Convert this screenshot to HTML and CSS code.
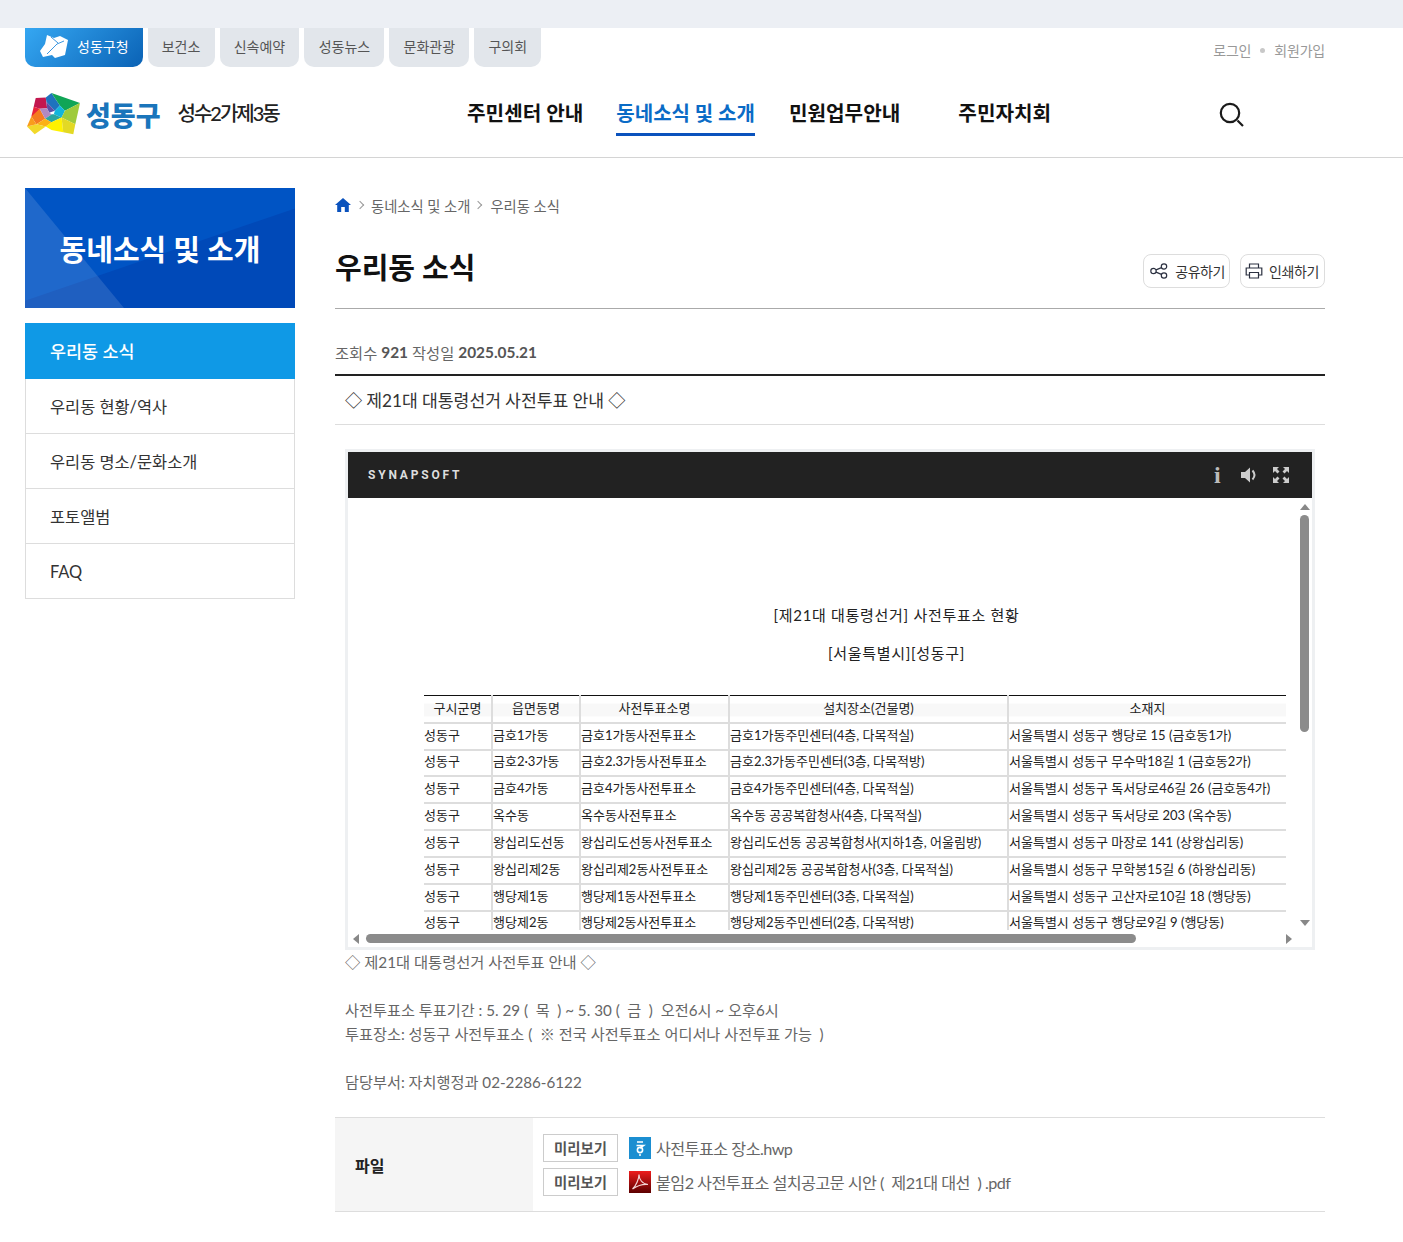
FILE: index.html
```html
<!DOCTYPE html>
<html lang="ko">

<head>
    <meta charset="UTF-8">
    <meta name="viewport" content="width=device-width, initial-scale=1.0">
    <title>우리동 소식</title>
    <link rel="stylesheet" href="styles.css">
</head>

<body>
    <div class="top-strip"></div>

    <div class="util-row">
        <ul class="site-tabs">
            <li class="site-tab site-tab-main">
                <svg class="tab-logo" viewBox="0 0 28 24">
                    <path d="M7 1 L14 4 L20 2 L28 6 L25 21 L15 24 L12 21 L3 23 L0 17 L5 10 Z" fill="#fff" />
                    <path d="M7 20 L17 10 L24 7 M11 3 L18 9" stroke="#3b97e0" stroke-width="1" fill="none" />
                </svg>
                성동구청
            </li>
            <li class="site-tab">보건소</li>
            <li class="site-tab">신속예약</li>
            <li class="site-tab">성동뉴스</li>
            <li class="site-tab">문화관광</li>
            <li class="site-tab">구의회</li>
        </ul>
        <div class="member-links">
            <span>로그인</span>
            <i class="member-dot"></i>
            <span>회원가입</span>
        </div>
    </div>

    <header class="site-header">
        <div class="brand">
            <svg class="brand-mark" viewBox="22 25 158 125">
                <polygon points="48,40 78,38 82,70 60,72 42,66" fill="#c2174f" />
                <polygon points="78,38 95,25 120,62 105,78 80,52" fill="#1e73be" />
                <polygon points="80,52 105,78 88,84 82,70" fill="#5a4fa8" />
                <polygon points="95,25 180,55 135,78 120,62" fill="#10a556" />
                <polygon points="105,78 120,62 135,78 125,98 102,88" fill="#12b5dc" />
                <polygon points="135,78 180,55 166,118 125,98" fill="#9fcb3c" />
                <polygon points="42,66 60,72 45,92 35,95" fill="#e8233b" />
                <polygon points="35,95 60,72 76,102 50,118" fill="#f47b20" />
                <polygon points="60,72 82,70 88,84 96,88 76,102" fill="#b189c0" />
                <polygon points="96,88 102,88 125,98 95,112 76,102" fill="#2aa5a0" />
                <polygon points="95,112 125,98 130,142 95,135 78,125" fill="#fff200" />
                <polygon points="50,118 76,102 95,112 78,125" fill="#fbb116" />
                <polygon points="22,125 50,118 78,125 45,148" fill="#f2d92a" />
                <polygon points="35,95 50,118 22,125" fill="#f99d1c" />
                <polygon points="125,98 166,118 160,148 130,142" fill="#e3d924" />
            </svg>
            <span class="brand-gu">성동구</span>
            <span class="brand-dong">성수2가제3동</span>
        </div>
        <nav class="gnb">
            <a class="gnb-item">주민센터 안내</a>
            <a class="gnb-item gnb-item-on">동네소식 및 소개</a>
            <a class="gnb-item">민원업무안내</a>
            <a class="gnb-item gnb-item-last">주민자치회</a>
        </nav>
        <svg class="search-icon" viewBox="0 0 28 28">
            <circle cx="12" cy="12" r="9.2" fill="none" stroke="#1a1a1a" stroke-width="2.2" />
            <path d="M19.5 19.5 L25 25" stroke="#1a1a1a" stroke-width="2.2" />
        </svg>
    </header>

    <div class="page">
        <aside class="side">
            <h2 class="side-title"><span>동네소식 및 소개</span></h2>
            <ul class="side-menu">
                <li class="side-item side-item-on">우리동 소식</li>
                <li class="side-item">우리동 현황/역사</li>
                <li class="side-item">우리동 명소/문화소개</li>
                <li class="side-item">포토앨범</li>
                <li class="side-item">FAQ</li>
            </ul>
        </aside>

        <main class="content">
            <div class="crumbs">
                <svg class="crumb-home" viewBox="0 0 16 14">
                    <path d="M8 0 L16 7 L13.8 7 L13.8 14 L9.8 14 L9.8 9 L6.2 9 L6.2 14 L2.2 14 L2.2 7 L0 7 Z" fill="#0a52bd" />
                </svg>
                <i class="crumb-arrow"></i>
                <span>동네소식 및 소개</span>
                <i class="crumb-arrow"></i>
                <span>우리동 소식</span>
            </div>

            <div class="title-row">
                <h1 class="page-title">우리동 소식</h1>
                <div class="title-tools">
                    <button class="tool-btn">
                        <svg viewBox="0 0 18 16" class="tool-icon">
                            <circle cx="3.5" cy="8" r="2.7" />
                            <circle cx="14" cy="3.5" r="2.7" />
                            <circle cx="14" cy="12.5" r="2.7" />
                            <path d="M6 6.9 L11.5 4.6 M6 9.1 L11.5 11.4" />
                        </svg>
                        공유하기
                    </button>
                    <button class="tool-btn">
                        <svg viewBox="0 0 18 16" class="tool-icon">
                            <path d="M4.5 5 V1 H13.5 V5 M4.5 12 H1.2 V5 H16.8 V12 H13.5" />
                            <path d="M4.5 9.5 H13.5 V15 H4.5 Z" />
                        </svg>
                        인쇄하기
                    </button>
                </div>
            </div>

            <div class="post-meta">조회수 <b>921</b> 작성일 <b>2025.05.21</b></div>
            <h3 class="post-head">◇ 제21대 대통령선거 사전투표 안내 ◇</h3>

            <div class="post-body">
                <section class="viewer">
                    <div class="viewer-bar">
                        <span class="viewer-brand">SYNAPSOFT</span>
                        <div class="viewer-tools">
                            <span class="viewer-info">i</span>
                            <svg class="viewer-icon" viewBox="0 0 18 16">
                                <path d="M0 5 H4 L9 0.5 V15.5 L4 11 H0 Z" fill="#ccc" />
                                <path d="M11.5 3.5 Q15.5 8 11.5 12.5" stroke="#ccc" stroke-width="2" fill="none" />
                            </svg>
                            <svg class="viewer-icon" viewBox="0 0 16 16">
                                <path d="M0 0 H6 L4 2 L6.5 4.5 L4.5 6.5 L2 4 L0 6 Z" fill="#ccc" />
                                <path d="M16 0 H10 L12 2 L9.5 4.5 L11.5 6.5 L14 4 L16 6 Z" fill="#ccc" />
                                <path d="M0 16 H6 L4 14 L6.5 11.5 L4.5 9.5 L2 12 L0 10 Z" fill="#ccc" />
                                <path d="M16 16 H10 L12 14 L9.5 11.5 L11.5 9.5 L14 12 L16 10 Z" fill="#ccc" />
                            </svg>
                        </div>
                    </div>
                    <div class="viewer-body">
                        <div class="doc">
                            <p class="doc-title">[제21대 대통령선거] 사전투표소 현황</p>
                            <p class="doc-title doc-sub">[서울특별시][성동구]</p>
                            <table class="doc-table">
                                <colgroup>
                                    <col class="col-a">
                                    <col class="col-b">
                                    <col class="col-c">
                                    <col class="col-d">
                                    <col class="col-e">
                                </colgroup>
                                <thead>
                                    <tr>
                                        <th>구시군명</th>
                                        <th>읍면동명</th>
                                        <th>사전투표소명</th>
                                        <th>설치장소(건물명)</th>
                                        <th>소재지</th>
                                    </tr>
                                </thead>
                                <tbody>
                                    <tr>
                                        <td>성동구</td>
                                        <td>금호1가동</td>
                                        <td>금호1가동사전투표소</td>
                                        <td>금호1가동주민센터(4층, 다목적실)</td>
                                        <td>서울특별시 성동구 행당로 15 (금호동1가)</td>
                                    </tr>
                                    <tr>
                                        <td>성동구</td>
                                        <td>금호2·3가동</td>
                                        <td>금호2.3가동사전투표소</td>
                                        <td>금호2.3가동주민센터(3층, 다목적방)</td>
                                        <td>서울특별시 성동구 무수막18길 1 (금호동2가)</td>
                                    </tr>
                                    <tr>
                                        <td>성동구</td>
                                        <td>금호4가동</td>
                                        <td>금호4가동사전투표소</td>
                                        <td>금호4가동주민센터(4층, 다목적실)</td>
                                        <td>서울특별시 성동구 독서당로46길 26 (금호동4가)</td>
                                    </tr>
                                    <tr>
                                        <td>성동구</td>
                                        <td>옥수동</td>
                                        <td>옥수동사전투표소</td>
                                        <td>옥수동 공공복합청사(4층, 다목적실)</td>
                                        <td>서울특별시 성동구 독서당로 203 (옥수동)</td>
                                    </tr>
                                    <tr>
                                        <td>성동구</td>
                                        <td>왕십리도선동</td>
                                        <td>왕십리도선동사전투표소</td>
                                        <td>왕십리도선동 공공복합청사(지하1층, 어울림방)</td>
                                        <td>서울특별시 성동구 마장로 141 (상왕십리동)</td>
                                    </tr>
                                    <tr>
                                        <td>성동구</td>
                                        <td>왕십리제2동</td>
                                        <td>왕십리제2동사전투표소</td>
                                        <td>왕십리제2동 공공복합청사(3층, 다목적실)</td>
                                        <td>서울특별시 성동구 무학봉15길 6 (하왕십리동)</td>
                                    </tr>
                                    <tr>
                                        <td>성동구</td>
                                        <td>행당제1동</td>
                                        <td>행당제1동사전투표소</td>
                                        <td>행당제1동주민센터(3층, 다목적실)</td>
                                        <td>서울특별시 성동구 고산자로10길 18 (행당동)</td>
                                    </tr>
                                    <tr>
                                        <td>성동구</td>
                                        <td>행당제2동</td>
                                        <td>행당제2동사전투표소</td>
                                        <td>행당제2동주민센터(2층, 다목적방)</td>
                                        <td>서울특별시 성동구 행당로9길 9 (행당동)</td>
                                    </tr>
                                </tbody>
                            </table>
                        </div>
                        <div class="scroll-v">
                            <i class="arrow-up"></i>
                            <i class="thumb-v"></i>
                            <i class="arrow-down"></i>
                        </div>
                        <div class="scroll-h">
                            <i class="arrow-left"></i>
                            <i class="thumb-h"></i>
                            <i class="arrow-right"></i>
                        </div>
                    </div>
                </section>

                <p class="post-text post-text-lead">◇ 제21대 대통령선거 사전투표 안내 ◇</p>
                <p class="post-text">&nbsp;</p>
                <p class="post-text">사전투표소 투표기간 : 5. 29 (&ensp;목&ensp;) ~ 5. 30 (&ensp;금&ensp;) &nbsp;오전6시 ~ 오후6시</p>
                <p class="post-text">투표장소: 성동구 사전투표소 (&ensp;※ 전국 사전투표소 어디서나 사전투표 가능&ensp;)</p>
                <p class="post-text">&nbsp;</p>
                <p class="post-text">담당부서: 자치행정과 02-2286-6122</p>
            </div>

            <div class="files">
                <div class="files-label">파일</div>
                <ul class="files-list">
                    <li class="file-row">
                        <button class="preview-btn">미리보기</button>
                        <svg class="file-icon" viewBox="0 0 22 22">
                            <rect width="22" height="22" fill="#1b8ed1" />
                            <path d="M8 5 H14 M7.5 8.5 H14.5 L11 11" stroke="#fff" stroke-width="1.6" fill="none" />
                            <circle cx="11" cy="13" r="2.6" stroke="#fff" stroke-width="1.6" fill="none" />
                            <circle cx="11" cy="18" r="1" fill="#fff" />
                        </svg>
                        <span>사전투표소 장소.hwp</span>
                    </li>
                    <li class="file-row">
                        <button class="preview-btn">미리보기</button>
                        <svg class="file-icon" viewBox="0 0 22 22">
                            <defs>
                                <linearGradient id="pdfRed" x1="0" y1="0" x2="0" y2="1">
                                    <stop offset="0" stop-color="#ee1c1c" />
                                    <stop offset="1" stop-color="#5c0000" />
                                </linearGradient>
                            </defs>
                            <rect width="22" height="22" fill="url(#pdfRed)" />
                            <path d="M3.5 18 C7 15 10 8 10 3.5 C10 8 13 13 19 13.5 C14 13 8 15 3.5 18 Z" stroke="#f3d5d5" stroke-width="1.2" fill="none" />
                        </svg>
                        <span>붙임2 사전투표소 설치공고문 시안 (&ensp;제21대 대선&ensp;) .pdf</span>
                    </li>
                </ul>
            </div>
        </main>
    </div>
</body>

</html>
```

FILE: styles.css
```css
* {
    box-sizing: border-box;
}

body {
    margin: 0;
    font-family: Lato, "Noto Sans CJK KR", sans-serif;
    color: #555;
    background: #fff;
}

ul {
    margin: 0;
    padding: 0;
    list-style: none;
}

h1,
h2,
h3,
p {
    margin: 0;
}

.top-strip {
    height: 28px;
    background: #eceff4;
}

/* top tabs */
.util-row {
    display: flex;
    justify-content: space-between;
    height: 39px;
    padding: 0 78px 0 25px;
}

.site-tabs {
    display: flex;
    gap: 5px;
}

.site-tab {
    display: flex;
    align-items: center;
    height: 39px;
    padding: 0 14.2px 3px;
    font-size: 14px;
    color: #555;
    background: #e2e6eb;
    border-radius: 0 0 10px 10px;
}

.site-tab-main {
    gap: 9px;
    padding: 0 14px 3px 15px;
    color: #fff;
    background: linear-gradient(135deg, #35a7f2 0%, #0a62b5 100%);
}

.tab-logo {
    width: 28px;
    height: 24px;
}

.member-links {
    display: flex;
    align-items: center;
    gap: 9px;
    height: 44px;
    font-size: 14px;
    letter-spacing: -0.2px;
    color: #999;
}

.member-dot {
    width: 5px;
    height: 5px;
    border-radius: 50%;
    background: #c8c8c8;
}

/* header */
.site-header {
    display: flex;
    align-items: center;
    height: 91px;
    padding: 0 78px 0 27px;
    border-bottom: 1px solid #d4d4d4;
}

.brand {
    display: flex;
    align-items: center;
    width: 440px;
    flex: none;
}

.brand-mark {
    width: 53px;
    height: 42px;
    margin-top: 4px;
}

.brand-gu {
    margin: 4px 0 0 6px;
    font-size: 27px;
    font-weight: 900;
    color: #1a75bb;
}

.brand-dong {
    margin-left: 17px;
    font-size: 20px;
    font-weight: 500;
    letter-spacing: -2px;
    color: #222;
}

.gnb {
    display: flex;
    gap: 33px;
    height: 38px;
    margin-top: 10px;
}

.gnb-item {
    font-size: 20.2px;
    font-weight: 700;
    line-height: 30px;
    color: #111;
    white-space: nowrap;
}

.gnb-item-on {
    height: 38px;
    margin-right: 1px;
    font-size: 20px;
    color: #0a6bc6;
    border-bottom: 3px solid #0a52bd;
}

.gnb-item-last {
    margin-left: 25px;
}

.search-icon {
    width: 28px;
    height: 28px;
    margin-left: auto;
    margin-right: 79px;
    margin-top: 6px;
}

/* page */
.page {
    display: flex;
    gap: 40px;
    padding: 30px 78px 30px 25px;
}

.side {
    width: 270px;
    flex: none;
}

.side-title {
    position: relative;
    display: flex;
    align-items: center;
    justify-content: center;
    height: 120px;
    font-size: 29px;
    font-weight: 700;
    color: #fff;
    background: #0054c4;
    overflow: hidden;
}

.side-title::before {
    content: "";
    position: absolute;
    inset: 0;
    background: #0049b8;
    clip-path: polygon(0 94%, 100% 17%, 100% 100%, 0 100%);
}

.side-title::after {
    content: "";
    position: absolute;
    inset: 0;
    background: rgba(255, 255, 255, 0.12);
    clip-path: polygon(0 0, 99px 100%, 0 100%);
}

.side-title span {
    position: relative;
    z-index: 1;
}

.side-menu {
    margin-top: 15px;
    border: 1px solid #ddd;
    border-top: 0;
}

.side-item {
    display: flex;
    align-items: center;
    height: 55px;
    padding: 0 0 1px 24px;
    font-size: 16.4px;
    color: #333;
    border-bottom: 1px solid #ddd;
}

.side-item:last-child {
    height: 54px;
    padding: 1px 0 0 24px;
    border-bottom: 0;
}

.side-item-on {
    height: 56px;
    margin: 0 -1px;
    padding: 0 0 2px 25px;
    font-size: 17.4px;
    font-weight: 500;
    color: #fff;
    background: #0f99e6;
    border-bottom: 0;
}

.content {
    flex: 1;
    min-width: 0;
}

.crumbs {
    display: flex;
    align-items: center;
    height: 34px;
    font-size: 14.3px;
    color: #666;
}

.crumb-home {
    width: 16px;
    height: 14px;
}

.crumb-arrow {
    width: 6px;
    height: 6px;
    margin: 0 9px 0 5px;
    border-top: 1px solid #999;
    border-right: 1px solid #999;
    transform: rotate(45deg);
}

.crumb-home + .crumb-arrow {
    margin-left: 6px;
    margin-right: 8px;
}

.title-row {
    display: flex;
    align-items: center;
    justify-content: space-between;
    height: 87px;
    padding: 8px 0 7px;
    border-bottom: 1px solid #aaa;
}

.page-title {
    font-size: 29px;
    font-weight: 700;
    color: #111;
}

.title-tools {
    display: flex;
    gap: 10px;
    margin-top: 10px;
}

.tool-btn {
    display: flex;
    align-items: center;
    gap: 7px;
    height: 34px;
    padding: 0 4px 0 6px;
    font-family: inherit;
    font-size: 14px;
    letter-spacing: -0.4px;
    color: #333;
    background: #fff;
    border: 1px solid #ddd;
    border-radius: 8px;
}

.tool-btn + .tool-btn {
    gap: 6px;
    padding: 0 5px 0 4px;
}

.tool-icon {
    width: 18px;
    height: 16px;
    fill: none;
    stroke: #2b3040;
    stroke-width: 1.2;
}

.post-meta {
    display: flex;
    align-items: center;
    gap: 4px;
    height: 67px;
    padding-top: 20px;
    font-size: 15.3px;
    color: #666;
    border-bottom: 2px solid #222;
}

.post-meta b {
    font-size: 15.4px;
    font-weight: 700;
    color: #555;
}

.post-head {
    display: flex;
    align-items: center;
    height: 49px;
    padding: 0 0 2px 10px;
    font-size: 17.2px;
    font-weight: 400;
    word-spacing: -0.3px;
    color: #333;
    border-bottom: 1px solid #ddd;
}

.post-body {
    padding: 24px 10px 23px;
}

/* document viewer */
.viewer {
    display: flex;
    flex-direction: column;
    width: 970px;
    height: 501px;
    border: 3px solid #eef0f2;
}

.viewer-bar {
    display: flex;
    align-items: center;
    justify-content: space-between;
    height: 46px;
    padding: 0 22px 0 20px;
    flex: none;
    background: #222;
}

.viewer-brand {
    font-family: Roboto, sans-serif;
    font-size: 12px;
    font-weight: 700;
    letter-spacing: 2.8px;
    color: #ddd;
}

.viewer-tools {
    display: flex;
    align-items: center;
    gap: 13px;
}

.viewer-info {
    width: 8px;
    margin-right: 6px;
    font-family: "Liberation Serif", serif;
    font-size: 24px;
    font-weight: 700;
    line-height: 22px;
    color: #bbb;
}

.viewer-icon {
    width: 18px;
    height: 16px;
}

.viewer-body {
    display: grid;
    grid-template-columns: 1fr 17px;
    grid-template-rows: 1fr 17px;
    flex: 1;
    min-height: 0;
}

.doc {
    padding: 105px 8px 0 76px;
    overflow: hidden;
}

.doc-title {
    padding-left: 82px;
    font-size: 15px;
    line-height: 24px;
    letter-spacing: 0.7px;
    text-align: center;
    color: #222;
}

.doc-sub {
    margin-top: 14px;
}

.doc-table {
    width: 862px;
    margin-top: 30px;
    table-layout: fixed;
    border-collapse: collapse;
    font-size: 13px;
    color: #222;
}

.col-a {
    width: 68px;
}

.col-b {
    width: 88px;
}

.col-c {
    width: 149px;
}

.col-d {
    width: 279px;
}

.col-e {
    width: 278px;
}

.doc-table th {
    height: 27px;
    padding: 0 0 2px;
    font-weight: 400;
    border-top: 1px solid #111;
    border-left: 2px solid #ddd;
    border-bottom: 2px solid #ddd;
    background: linear-gradient(#fff 7px, #f8f8f8 7px, #f8f8f8 20px, #fff 20px);
}

.doc-table td {
    height: 27px;
    padding: 0 0 4px;
    white-space: nowrap;
    border-left: 2px solid #ddd;
    border-bottom: 2px solid #ddd;
}

.doc-table tr:nth-child(2) td,
.doc-table tr:nth-child(8) td {
    height: 26px;
}

.doc-table th:first-child,
.doc-table td:first-child {
    border-left: 0;
}

.scroll-v {
    display: flex;
    flex-direction: column;
    align-items: center;
    padding: 6px 0 0 2px;
    grid-row: 1 / 2;
    grid-column: 2;
}

.arrow-up {
    border: 5px solid transparent;
    border-top: 0;
    border-bottom: 6px solid #888;
}

.thumb-v {
    width: 9px;
    height: 217px;
    margin-top: 5px;
    border-radius: 5px;
    background: #8b8b8b;
}

.arrow-down {
    margin-top: auto;
    margin-bottom: 4px;
    border: 5px solid transparent;
    border-bottom: 0;
    border-top: 6px solid #888;
}

.scroll-h {
    display: flex;
    align-items: center;
    padding: 0 20px 0 5px;
    grid-row: 2;
    grid-column: 1 / 3;
}

.arrow-left {
    border: 5px solid transparent;
    border-left: 0;
    border-right: 6px solid #888;
}

.thumb-h {
    width: 770px;
    height: 9px;
    margin-left: 7px;
    border-radius: 5px;
    background: #8b8b8b;
}

.arrow-right {
    margin-left: auto;
    border: 5px solid transparent;
    border-right: 0;
    border-left: 6px solid #888;
}

.post-text {
    font-size: 15.2px;
    line-height: 24px;
    color: #666;
}

.post-text-lead {
    font-size: 15.3px;
}

/* attached files */
.files {
    display: flex;
    border-top: 1px solid #ddd;
    border-bottom: 1px solid #ddd;
}

.files-label {
    display: flex;
    align-items: center;
    width: 198px;
    padding-left: 20px;
    font-size: 16px;
    font-weight: 700;
    color: #222;
    background: #f5f5f5;
}

.files-list {
    display: flex;
    flex-direction: column;
    gap: 5px;
    padding: 15px 10px;
}

.file-row {
    display: flex;
    align-items: center;
    height: 29px;
    font-size: 16.2px;
    letter-spacing: -0.55px;
    color: #666;
}

.preview-btn {
    width: 75px;
    height: 28px;
    padding: 0;
    font-family: inherit;
    font-size: 14.4px;
    font-weight: 700;
    letter-spacing: 0;
    color: #555;
    background: #fff;
    border: 1px solid #ccc;
}

.file-icon {
    width: 22px;
    height: 22px;
    margin: 0 5px 0 11px;
}
```
